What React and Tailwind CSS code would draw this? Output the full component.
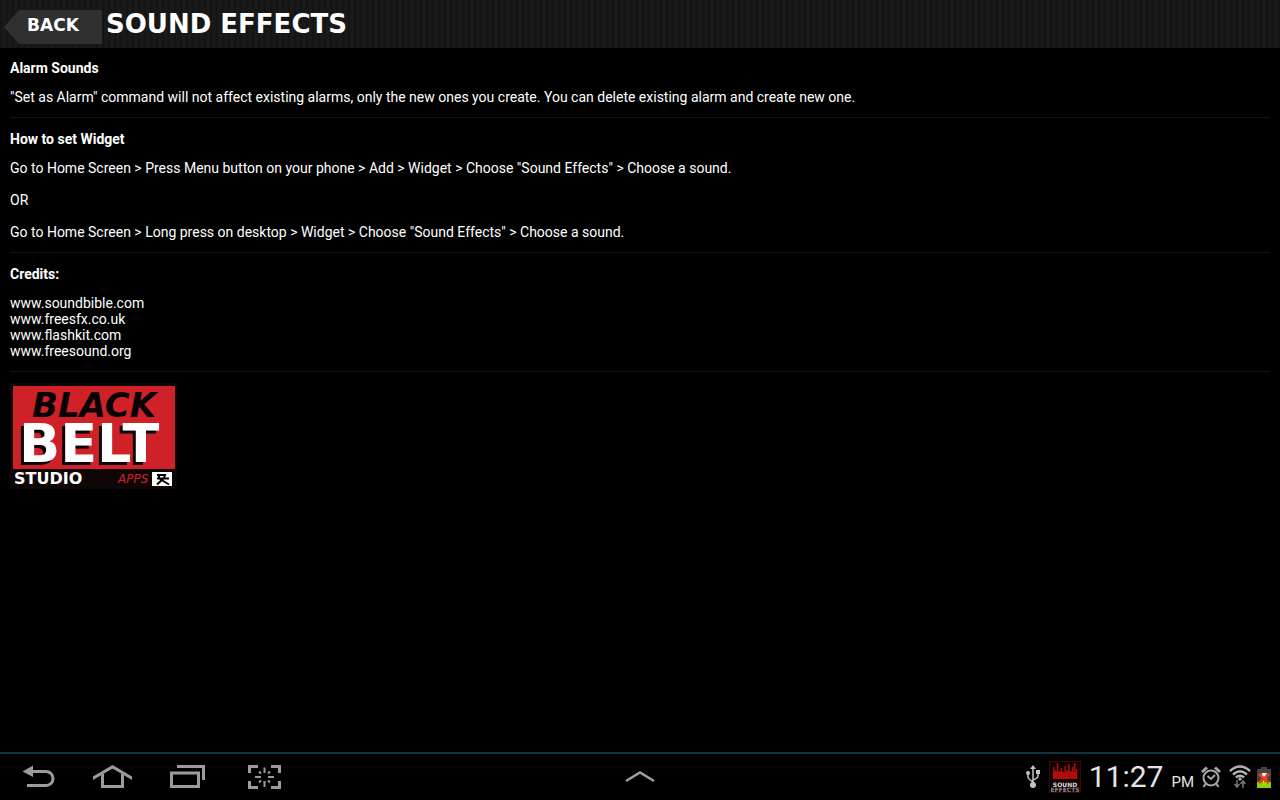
import React from 'react';

const credits = ['www.soundbible.com', 'www.freesfx.co.uk', 'www.flashkit.com', 'www.freesound.org'];

const equalizer = [12, 9, 16, 8, 11, 7, 13, 9, 15, 8, 12, 16, 10];

function Header() {
    return (
        <header className="flex h-12 items-center bg-[#181818] bg-[repeating-linear-gradient(90deg,#151515_0px,#151515_2px,#191919_2px,#191919_6px)] pl-1 text-white">
            <button
                type="button"
                className="mt-1.5 h-[34px] w-[98px] bg-[#303030] pb-1 text-center font-['DejaVu_Sans'] text-[17px] leading-6 font-bold [clip-path:polygon(0_50%,15px_0,100%_0,100%_100%,15px_100%)]"
            >
                BACK
            </button>
            <h1 className="ml-1 font-['DejaVu_Sans'] text-[26px] leading-[46px] font-bold">SOUND EFFECTS</h1>
        </header>
    );
}

function Section({ title, children }) {
    return (
        <section className="border-b border-[#141414] pt-[13px] pb-3 first:pt-3">
            <h2 className="mb-[13px] font-bold">{title}</h2>
            {children}
        </section>
    );
}

function StudioLogo() {
    return (
        <svg viewBox="0 0 167 106" className="mt-[11px] h-[106px] w-[167px]" role="img" aria-label="Black Belt Studio Apps">
            <rect width="167" height="106" fill="#0f0608" />
            <rect x="3" y="3" width="162" height="83" fill="#cf2128" />
            <g fontFamily="DejaVu Sans, sans-serif" fontWeight="bold">
                <text x="22" y="34" fontSize="34" fontStyle="italic" fill="#080405">BLACK</text>
                <text x="9" y="79" fontSize="54" fill="#fff" className="drop-shadow-[-3px_3px_0_#080405]">BELT</text>
                <text x="4" y="101" fontSize="16" fill="#fff">STUDIO</text>
                <text x="108" y="100" fontSize="12" fontWeight="normal" fontStyle="italic" fill="#cf2128">APPS</text>
            </g>
            <rect x="142" y="89" width="20" height="14" fill="#fff" />
            <path d="M147 92H155L154 95M147 95.500H159M154 95L147 101.500M150 96L159 101.500" fill="none" stroke="#000" strokeWidth="2" />
            <path d="M149 92V95" stroke="#000" strokeWidth="2" />
        </svg>
    );
}

function NavButton({ label, children }) {
    return (
        <button type="button" aria-label={label} className="h-[46px] w-[76px]">
            <svg viewBox="0 0 76 46" className="h-full w-full" fill="none" stroke="#9c9c9c" strokeWidth="3">
                {children}
            </svg>
        </button>
    );
}

function StatusArea() {
    return (
        <div className="flex items-center justify-end pr-[9px] text-[#e4e4e4]">
            {/* usb */}
            <svg viewBox="0 0 16 24" className="h-6 w-4" fill="none" stroke="#c4c4c4" strokeWidth="1.500">
                <path d="M8 3V20M3 9V12Q3 14 8 17M13 8V11Q13 13 8 15" />
                <path d="M8 0L11 4H5Z" fill="#c4c4c4" stroke="none" />
                <circle cx="3" cy="8" r="2" fill="#c4c4c4" stroke="none" />
                <path d="M11 5H15V9H11Z" fill="#c4c4c4" stroke="none" />
                <circle cx="8" cy="20" r="3" fill="#c4c4c4" stroke="none" />
            </svg>
            {/* app notification */}
            <svg viewBox="0 0 32 32" className="ml-2 h-8 w-8">
                <rect x="0.500" y="0.500" width="31" height="31" fill="#100000" stroke="#450507" />
                <rect x="4" y="11" width="24" height="7" fill="#a30c0c" />
                {equalizer.map((h, i) => (
                    <rect key={i} x={4 + i * 1.9} y={18 - h} width="1.500" height={h} fill="#b50d0d" />
                ))}
                <g fontFamily="DejaVu Sans, sans-serif" fontWeight="bold" textAnchor="middle">
                    <text x="16" y="26" fontSize="6" fill="#ddd">SOUND</text>
                    <text x="16" y="31" fontSize="6" fill="#888">EFFECTS</text>
                </g>
            </svg>
            <time className="ml-2 flex items-baseline gap-2">
                <span className="text-[30px] leading-9">11:27</span>
                <span className="text-[15px]">PM</span>
            </time>
            {/* alarm */}
            <svg viewBox="0 0 20 22" className="ml-[7px] h-[22px] w-5" fill="none" stroke="#a8a8a8" strokeWidth="2">
                <circle cx="10" cy="12" r="7.500" />
                <path d="M1 6L6 1.500M19 6L14 1.500" strokeWidth="3" />
                <path d="M6.500 10L10 13L14 9M4.500 18L2.500 21M15.500 18L17.500 21" />
            </svg>
            {/* wifi */}
            <svg viewBox="0 0 22 24" className="ml-2 h-6 w-[22px]" fill="none" stroke="#b4b4b4" strokeWidth="2.500">
                <path d="M1 6Q11 -3 21 6M4 9.500Q11 3 18 9.500M7 12.500Q11 9 15 12.500" />
                <path d="M9 14L11 12L13 14L11 16Z" fill="#b4b4b4" stroke="none" />
                <path d="M8 15V22M5.500 19L8 22L10.500 19M14 23V16M11.500 19L14 16L16.500 19" stroke="#777" strokeWidth="1.500" />
            </svg>
            {/* battery */}
            <svg viewBox="0 0 14 21" className="ml-1.5 h-[21px] w-3.5">
                <path d="M4 0H10V2H14V21H0V2H4Z" fill="#444" />
                <rect y="15" width="14" height="6" fill="#8fd400" />
                <path d="M5 6H10L8 10L10 11L6 16V11H4Z" fill="#eee" />
                <path d="M2 7L12 16M12 7L2 16" stroke="#f03c14" strokeWidth="2.500" />
            </svg>
        </div>
    );
}

function SystemBar() {
    return (
        <footer className="grid grid-cols-[1fr_auto_1fr] items-center border-t-2 border-[#0d3341] bg-black">
            <div className="flex">
                <NavButton label="Back">
                    <path d="M31 17.500H46A7 7 0 0 1 46 31.500H27" />
                    <path d="M22.500 17.500L33 11.500V23Z" fill="#9c9c9c" stroke="none" />
                </NavButton>
                <NavButton label="Home">
                    <path d="M26.500 20V32.500H46.500V20" />
                    <path d="M17 22.500L36.500 11L56 22.500V26L36.500 14.500L17 26Z" fill="#9c9c9c" stroke="none" />
                </NavButton>
                <NavButton label="Recent apps">
                    <path d="M19.500 19H46.500V32.500H19.500ZM25 12.500H51.500V26" />
                </NavButton>
                <NavButton label="Screen capture">
                    <path d="M21.500 19V12.500H30M43 12.500H51.500V19M51.500 27V33.500H43M30 33.500H21.500V27" />
                    <path d="M36.500 13.500V19M36.500 27V33M27 23H33M40 23H46M31 17.500L33 19.500M42 17.500L40 19.500M31 28.500L33 26.500M42 28.500L40 26.500" strokeWidth="2" />
                </NavButton>
            </div>
            <button type="button" aria-label="Show mini apps" className="h-[46px] w-[76px]">
                <svg viewBox="0 0 76 46" className="h-full w-full" fill="none" stroke="#a0a0a0" strokeWidth="2.500">
                    <path d="M24 27L38 18.500L52 27" />
                </svg>
            </button>
            <StatusArea />
        </footer>
    );
}

export default function App() {
    return (
        <div className="flex min-h-screen flex-col bg-black font-[Roboto,sans-serif] text-white">
            <Header />
            <main className="flex-1 px-2.5 text-sm leading-4">
                <Section title="Alarm Sounds">
                    <p>"Set as Alarm" command will not affect existing alarms, only the new ones you create. You can delete existing alarm and create new one.</p>
                </Section>
                <Section title="How to set Widget">
                    <div className="space-y-4">
                        <p>Go to Home Screen &gt; Press Menu button on your phone &gt; Add &gt; Widget &gt; Choose "Sound Effects" &gt; Choose a sound.</p>
                        <p>OR</p>
                        <p>Go to Home Screen &gt; Long press on desktop &gt; Widget &gt; Choose "Sound Effects" &gt; Choose a sound.</p>
                    </div>
                </Section>
                <Section title="Credits:">
                    <ul>
                        {credits.map((site) => (
                            <li key={site}>{site}</li>
                        ))}
                    </ul>
                </Section>
                <StudioLogo />
            </main>
            <SystemBar />
        </div>
    );
}
